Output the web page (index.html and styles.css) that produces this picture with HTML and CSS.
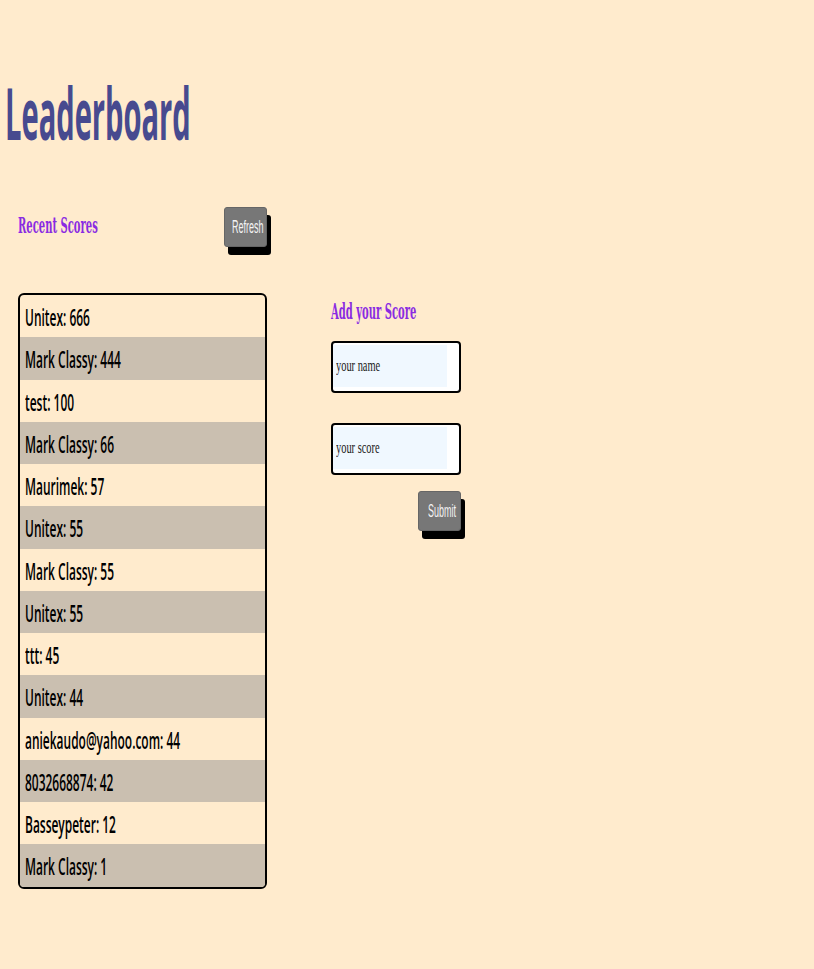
FILE: index.html
```html
<!DOCTYPE html>
<html lang="en">
<head>
<meta charset="utf-8">
<title>Leaderboard</title>
<link rel="stylesheet" href="styles.css">
</head>
<body>
<h1 class="title"><span class="sq">Leaderboard</span></h1>
<main class="board">
  <section class="recent">
    <div class="recent-head">
      <h2 class="sub"><span class="sq">Recent Scores</span></h2>
      <button class="btn btn-refresh" type="button"><span class="sq">Refresh</span></button>
    </div>
    <ul class="scores">
      <li><span class="sq">Unitex: 666</span></li>
      <li><span class="sq">Mark Classy: 444</span></li>
      <li><span class="sq">test: 100</span></li>
      <li><span class="sq">Mark Classy: 66</span></li>
      <li><span class="sq">Maurimek: 57</span></li>
      <li><span class="sq">Unitex: 55</span></li>
      <li><span class="sq">Mark Classy: 55</span></li>
      <li><span class="sq">Unitex: 55</span></li>
      <li><span class="sq">ttt: 45</span></li>
      <li><span class="sq">Unitex: 44</span></li>
      <li><span class="sq">aniekaudo@yahoo.com: 44</span></li>
      <li><span class="sq">8032668874: 42</span></li>
      <li><span class="sq">Basseypeter: 12</span></li>
      <li><span class="sq">Mark Classy: 1</span></li>
    </ul>
  </section>
  <section class="add">
    <h2 class="sub"><span class="sq">Add your Score</span></h2>
    <form class="form">
      <label class="field"><span class="field-inner"><span class="sq ph">your name</span></span></label>
      <label class="field"><span class="field-inner"><span class="sq ph">your score</span></span></label>
      <div class="form-actions">
        <button class="btn btn-submit" type="button"><span class="sq">Submit</span></button>
      </div>
    </form>
  </section>
</main>
</body>
</html>
```

FILE: styles.css
```css
* { box-sizing: border-box; }
html, body { margin: 0; padding: 0; }
body {
  background: #ffebcd;
  font-family: "Open Sans", "DejaVu Sans", sans-serif;
  color: #000;
  width: 814px;
  height: 969px;
  overflow: hidden;
}
.sq {
  display: inline-block;
  transform-origin: left center;
  white-space: nowrap;
}
.title {
  margin: 0;
  padding: 68px 0 0 5px;
  font-size: 71px;
  line-height: 90px;
  font-weight: 700;
  color: #474a8f;
  height: 160px;
}
.title .sq { transform: scaleX(0.41); }
.board {
  display: flex;
  align-items: flex-start;
  padding-left: 18px;
  gap: 60px;
}
.recent { width: 253px; }
.recent-head {
  display: flex;
  justify-content: space-between;
  align-items: flex-start;
  padding-top: 47px;
  height: 133px;
}
.sub {
  margin: 0;
  font-family: "DejaVu Serif", "Liberation Serif", serif;
  font-weight: 700;
  font-size: 22px;
  line-height: 30px;
  color: #8a2be2;
}
.sub .sq { transform: scaleX(0.455); }
.recent-head .sub { margin-top: 3px; }
.btn {
  width: 43px;
  height: 40px;
  padding: 0;
  border: 1px solid #666;
  border-radius: 3px;
  background: #777;
  color: #f4f4f4;
  box-shadow: 4px 8px 0 #000;
  font-family: "Liberation Sans", Arial, sans-serif;
  font-size: 18px;
  display: flex;
  align-items: center;
  justify-content: flex-start;
  padding-left: 7px;
}
.btn .sq { transform: scaleX(0.5); }
.btn-refresh { margin-right: 4px; }
.scores {
  list-style: none;
  margin: 0;
  padding: 0;
  width: 249px;
  border: 2px solid #000;
  border-radius: 6px;
  overflow: hidden;
}
.scores li {
  height: 42.25px;
  display: flex;
  align-items: center;
  padding: 2px 0 0 5px;
  font-size: 23px;
  font-weight: 600;
}
.scores li .sq { transform: scaleX(0.52); }
.scores li:nth-child(even) { background: #cabfb0; }
.add { padding-top: 136px; width: 140px; }
.add .sub { margin-bottom: 15px; }
.form { display: flex; flex-direction: column; gap: 30px; }
.field {
  display: block;
  width: 130px;
  height: 52px;
  border: 2px solid #000;
  border-radius: 4px;
  background: #fff;
  padding: 2px 12px 4px 0;
}
.field-inner {
  display: flex;
  align-items: center;
  height: 100%;
  background: #f0f8ff;
  padding-left: 3px;
}
.ph {
  font-family: "Liberation Serif", serif;
  font-size: 16px;
  color: #222;
  transform: scaleX(0.65);
}
.form-actions {
  display: flex;
  justify-content: flex-end;
  margin-top: -14px;
  width: 130px;
}
.btn-submit { padding-left: 9px; }
```
